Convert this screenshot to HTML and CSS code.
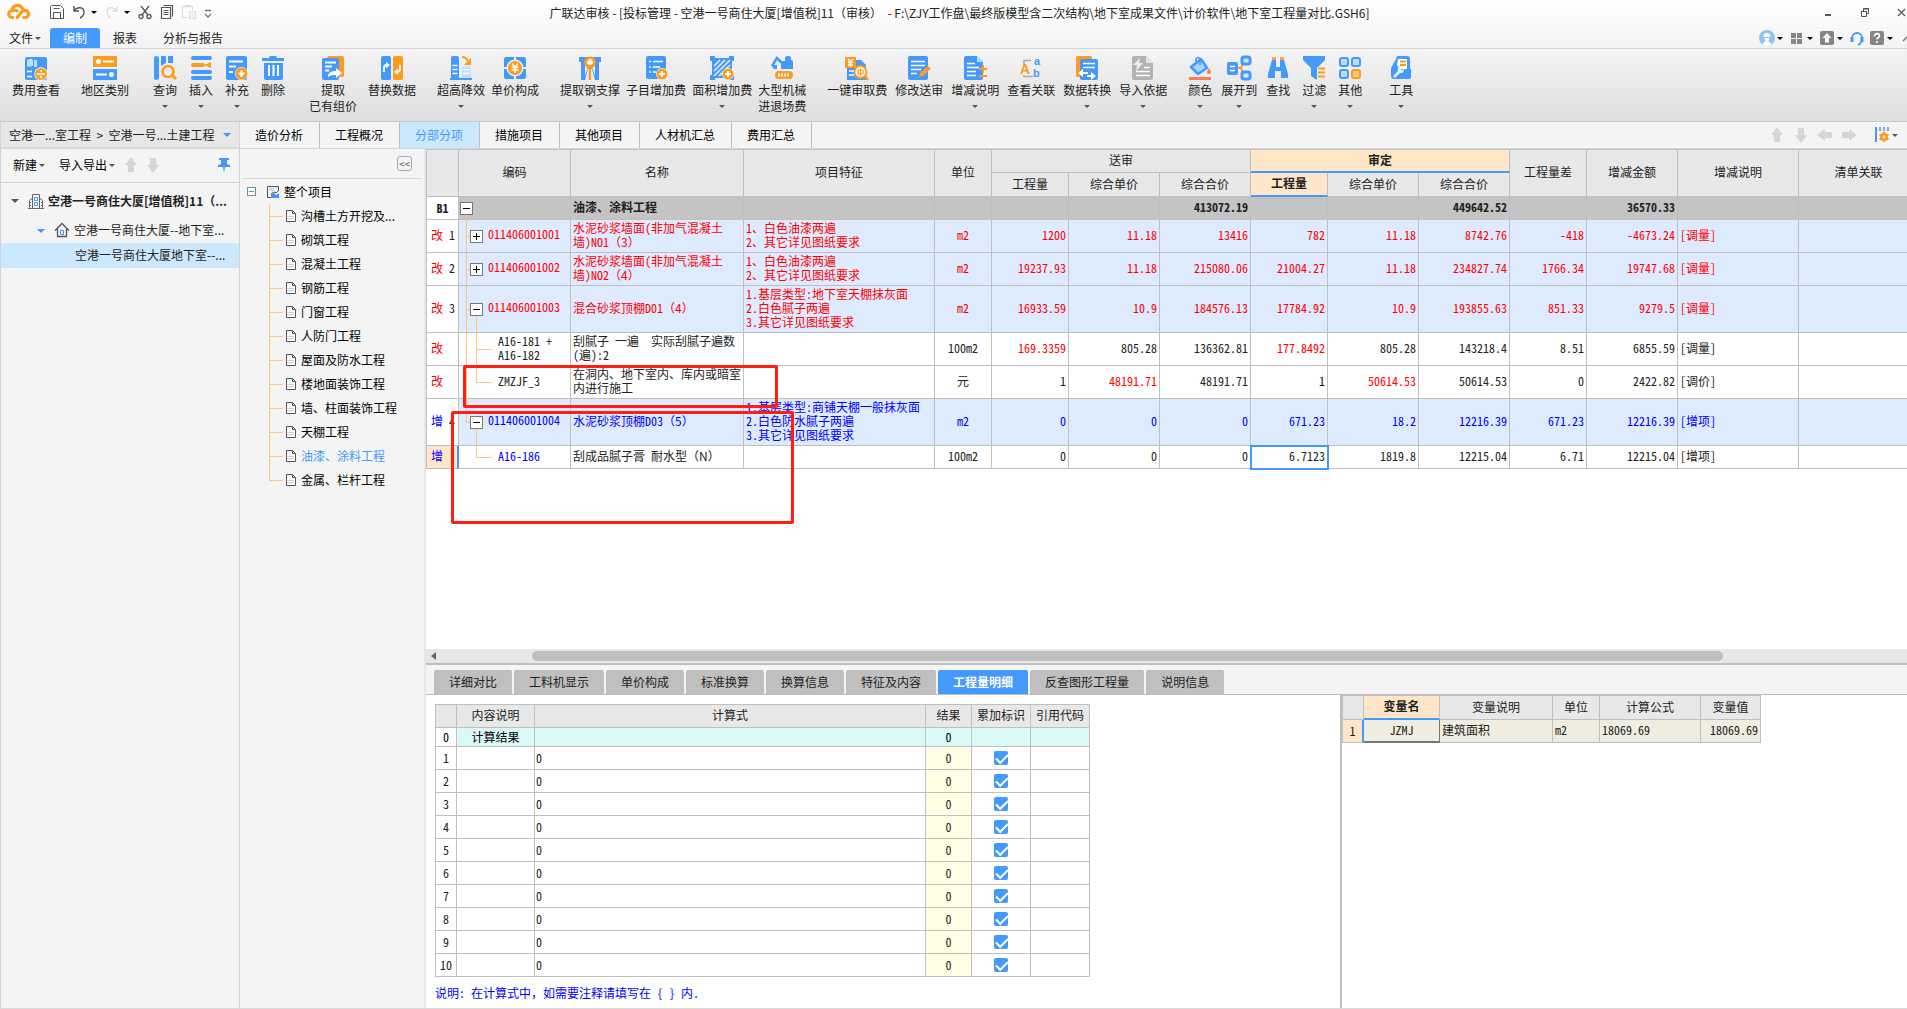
FILE: index.html
```html
<!DOCTYPE html>
<html lang="zh-CN">
<head>
    <meta charset="UTF-8">
    <meta name="viewport" content="width=device-width, initial-scale=1.0">
    <title>广联达审核</title>
    <link rel="stylesheet" href="styles.css">
</head>
<body>
    <svg class="defs" aria-hidden="true">
        <symbol id="doc" viewBox="0 0 12 14">
            <path d="M1.500 1.500h6l3 3v8h-9z" fill="#fff" stroke="#555"/>
            <path d="M7.500 1.500v3h3" fill="none" stroke="#555"/>
            <path d="M3 7.500h6M3 9.500h6" stroke="#ccc"/>
        </symbol>
        <symbol id="arrow" viewBox="0 0 16 16">
            <path d="M8 0l6 8h-3v7H5V8H2z" fill="#d6d6d6"/>
        </symbol>
        <symbol id="plus" viewBox="0 0 12 12">
            <circle cx="6" cy="6" r="6" fill="#fff"/>
            <circle cx="6" cy="6" r="5.500" fill="#ff9a1a"/>
            <path d="M6 3v6M3 6h6" stroke="#fff" stroke-width="2"/>
        </symbol>
    </svg>

    <header class="top">
        <div class="title-row">
            <div class="quick">
                <svg class="logo" viewBox="0 0 24 18"><path d="M7 14.500H5.500a3.500 3.500 0 0 1-.5-7c0-4.500 5.500-6.500 9-4 1.500 1 2 2.500 2 3.500M5.500 8c3-1.500 5 0 5.500 1M9 14.500c4 0 3.500-6 7.500-7 5.500-1 7 6 2 7h-3" fill="none" stroke="#ff9a1a" stroke-width="3.200"/></svg>
                <button aria-label="保存"><svg viewBox="0 0 16 16"><path d="M1.500 14.500v-12l1-1h9l3 3v10zM4.500 14.500v-6h7v6M4.500 4.500h6" fill="none" stroke="#555"/></svg></button>
                <button aria-label="撤销"><svg viewBox="0 0 16 16"><path d="M3 2v5h5M3 7c3-5 10-4 10 1 0 3-2 5-4 6" fill="none" stroke="#555" stroke-width="1.400"/></svg><i class="caret dark"></i></button>
                <button aria-label="恢复"><svg viewBox="0 0 16 16"><path d="M13 2v5H8M13 7C10 2 3 3 3 8c0 3 2 5 4 6" fill="none" stroke="#ddd" stroke-width="1.400"/></svg><i class="caret dark"></i></button>
                <button aria-label="剪切"><svg viewBox="0 0 16 16"><path d="M4 2l7 9M12 2l-7 9" stroke="#555" stroke-width="1.300"/><circle cx="4" cy="12.500" r="2" fill="none" stroke="#555" stroke-width="1.300"/><circle cx="12" cy="12.500" r="2" fill="none" stroke="#555" stroke-width="1.300"/></svg></button>
                <button aria-label="复制"><svg viewBox="0 0 16 16"><path d="M4.500 1.500h9v11M2.500 3.500h9v11h-9zM4.500 6.500h5M4.500 8.500h5M4.500 10.500h5" fill="none" stroke="#555" stroke-width="1.200"/></svg></button>
                <button aria-label="粘贴"><svg viewBox="0 0 16 16"><path d="M6 13.500H1.500v-11h10V6M4.500 3.500v-2h4v2M8.500 7.500h6v7h-6zM10 10h3M10 12h3" fill="none" stroke="#ddd" stroke-width="1.200"/></svg></button>
                <button aria-label="更多"><svg class="narrow" viewBox="0 0 10 16"><path d="M2 6.500h6M2 10l3 3 3-3" fill="none" stroke="#777" stroke-width="1.300"/></svg></button>
            </div>
            <h1 class="title">广联达审核 - [投标管理 - 空港一号商住大厦[增值税]11（审核）&nbsp; - F:\ZJY工作盘\最终版模型含二次结构\地下室成果文件\计价软件\地下室工程量对比.GSH6]</h1>
            <div class="window-buttons">
                <button aria-label="最小化"><svg viewBox="0 0 16 16"><path d="M5 11h6" stroke="#555" stroke-width="2"/></svg></button>
                <button aria-label="还原"><svg viewBox="0 0 16 16"><path d="M4.500 7.500h5v5h-5zM4 7.500h6M6.500 7V4.500h5v5H10M6.500 5h5" fill="none" stroke="#555"/></svg></button>
                <button class="close" aria-label="关闭"><svg viewBox="0 0 16 16"><path d="M7 5l7 7M14 5l-7 7" stroke="#555" stroke-width="1.200"/></svg></button>
            </div>
        </div>
        <nav class="menu-row">
            <button class="menu file">文件<i class="caret"></i></button>
            <button class="menu active">编制</button>
            <button class="menu">报表</button>
            <button class="menu wide">分析与报告</button>
            <div class="menu-tools">
                <button aria-label="用户"><svg viewBox="0 0 16 16"><circle cx="8" cy="8" r="8" fill="#8cc4f6"/><path d="M4.500 7a3.500 4 0 0 1 7 0zM5.500 8h5a2.500 3 0 0 1-1 2.500c0 2 3 2 3 4a8 8 0 0 1-9 0c0-2 3-2 3-4a2.500 3 0 0 1-1-2.500" fill="#fff"/></svg><i class="caret dark"></i></button>
                <button aria-label="布局"><svg viewBox="0 0 16 16"><path d="M2 3h5v5H2zM8 3h5v5H8zM2 9h5v5H2zM8 9h5v5H8z" fill="#858585"/></svg><i class="caret dark"></i></button>
                <button aria-label="升级"><svg viewBox="0 0 16 16"><rect x="1" y="1" width="14" height="14" rx="2" fill="#858585"/><path d="M8 3l4.500 5H10v4.500H6V8H3.500z" fill="#fff"/></svg><i class="caret dark"></i></button>
                <button class="short" aria-label="客服"><svg viewBox="0 0 16 16"><path d="M3 9V8a5 5 0 0 1 10 0c0 4-1.500 6-4 7" fill="none" stroke="#4499ff" stroke-width="1.800"/><path d="M1.500 7h3v5h-3zM11.500 7h3v5h-3z" fill="#4499ff"/></svg></button>
                <button aria-label="帮助"><svg viewBox="0 0 16 16"><rect x="1" y="1" width="14" height="14" rx="2" fill="#858585"/><path d="M5.500 6.500c0-4 5-3.500 5-.5 0 2-2.500 1.500-2.500 3.500M8 11v2" fill="none" stroke="#fff" stroke-width="1.600"/></svg><i class="caret dark"></i></button>
                <button class="tiny" aria-label="收起"><svg viewBox="0 0 8 16"><path d="M4 11l5-5" stroke="#777" stroke-width="1.500"/></svg></button>
            </div>
        </nav>
    </header>

    <div class="ribbon">
        <div class="group">
            <button><svg viewBox="0 0 24 24"><rect x="1" y="1" width="22" height="23" rx="2" fill="#4499ff"/><path d="M3 4l4-1.500L9 4v6l-5 1-1-1zM10 4h3v7h-3z" fill="#c4e0ff"/><path d="M3 15.500h5M3 20.500h5" stroke="#fff" stroke-width="1.500"/><circle cx="17" cy="18" r="6.700" fill="#fff"/><circle cx="17" cy="18" r="6" fill="#ff9a1a"/><path d="M13 18h8" stroke="#fff" stroke-width="1.600"/><circle cx="17" cy="15" r="1.200" fill="#fff"/><circle cx="17" cy="21" r="1.200" fill="#fff"/></svg>费用查看</button>
        </div>
        <div class="group">
            <button><svg viewBox="0 0 24 24"><path d="M0 0h24v11H0z" fill="#ff9a1a"/><path d="M0 13h24v11H0z" fill="#4499ff"/><path d="M10 5.500h11M3 18.500h11" stroke="#fff" stroke-width="2"/><circle cx="5.500" cy="5.500" r="2.500" fill="#fff"/><circle cx="18.500" cy="18.500" r="2.500" fill="#fff"/></svg>地区类别</button>
        </div>
        <div class="group">
            <button><svg viewBox="0 0 24 24"><path d="M1 2q0-2 2.500-2T6 2v20q0 2-2.500 2T1 22zM8 0h5v7l-5 3zM15 0h5v7h-5z" fill="#4499ff"/><circle cx="15" cy="15.500" r="6.500" fill="#eee"/><circle cx="15" cy="15.500" r="5.500" fill="none" stroke="#ff9a1a" stroke-width="2.600"/><path d="M19 19l4 4" stroke="#ff9a1a" stroke-width="3"/></svg>查询<i class="caret"></i></button>
            <button><svg viewBox="0 0 24 24"><path d="M4 2h17M4 16h17M4 22h17" stroke="#4499ff" stroke-width="4" stroke-linecap="round"/><path d="M4 9h10" stroke="#ff9a1a" stroke-width="4" stroke-linecap="round"/><path d="M22 6v6l-7-3z" fill="#ff9a1a"/></svg>插入<i class="caret"></i></button>
            <button><svg viewBox="0 0 24 24"><rect x="1" y="0" width="21" height="24" rx="2" fill="#4499ff"/><path d="M4 5.500h14M4 10.500h7M4 16h4" stroke="#fff" stroke-width="2"/><use href="#plus" x="10" y="11" width="13" height="13"/></svg>补充<i class="caret"></i></button>
            <button><svg viewBox="0 0 24 24"><path d="M2 2h6l1-2h6l1 2h7v3H1V2zM3 7h19v15q0 2-2 2H5q-2 0-2-2z" fill="#4499ff"/><path d="M8 9v11M12.500 9v11M17 9v11" stroke="#fff" stroke-width="2"/></svg>删除</button>
        </div>
        <div class="group apart">
            <button><svg viewBox="0 0 24 24"><rect x="6" y="0" width="17" height="21" rx="2" fill="#ff9a1a"/><rect x="1" y="2" width="17" height="22" rx="2" fill="#4499ff"/><path d="M4 6.500h11M4 10.500h7M4 14.500h4" stroke="#fff" stroke-width="1.800"/><path d="M7 21c0-5 4-6 8-6v-3l6 5-6 5v-3c-3 0-5 0-8 2z" fill="#fff"/></svg>提取<br>已有组价</button>
            <button><svg viewBox="0 0 24 24"><rect x="1" y="0" width="10" height="24" rx="2" fill="#4499ff"/><rect x="13" y="0" width="10" height="24" rx="2" fill="#ff9a1a"/><path d="M4 16v-4q0-3 3-3M20 9v4q0 3-3 3" fill="none" stroke="#fff" stroke-width="2"/><path d="M6 6l4 3-4 3.500zM18 12.500l-4 3.500 4 3z" fill="#fff"/></svg>替换数据</button>
        </div>
        <div class="group">
            <button><svg viewBox="0 0 24 24"><path d="M2 2q0-2 2-2h4q2 0 2 2v20H2z" fill="#4499ff"/><path d="M13 12q0-2 2-2h5q2 0 2 2v10h-9z" fill="#bfe0ff"/><path d="M3.500 9.500h5M3.500 13.500h5M3.500 17.500h5M14.500 13.500h6M14.500 17.500h6" stroke="#fff" stroke-width="1.500"/><path d="M1 23h22" stroke="#4499ff" stroke-width="2"/><path d="M13 1q4 0 6 4" fill="none" stroke="#ff9a1a" stroke-width="2"/><path d="M22 2v7h-7z" fill="#ff9a1a"/></svg>超高降效<i class="caret"></i></button>
            <button><svg viewBox="0 0 24 24"><rect x="1" y="1" width="22" height="22" rx="2" fill="#4499ff"/><path d="M12 0v4M12 20v4M0 12h4M20 12h4" stroke="#eee" stroke-width="2"/><circle cx="12" cy="12" r="8.500" fill="#eee"/><circle cx="12" cy="12" r="7" fill="#ff9a1a"/><path d="M9 7.500l3 4 3-4M12 11v6M8.500 11.500h7M8.500 14h7" fill="none" stroke="#fff" stroke-width="1.500"/></svg>单价构成</button>
        </div>
        <div class="group">
            <button><svg viewBox="0 0 24 24"><path d="M1 1h22v5h-2v18h-4l-3-11h-4L7 24H3V6H1z" fill="#4499ff"/><path d="M7 8v12l3-9zM17 8v12l-3-9z" fill="#e8f2ff"/><path d="M12 11v13" stroke="#ff9a1a" stroke-width="2.200"/><circle cx="12" cy="6.500" r="6" fill="#ff9a1a"/><path d="M12 3v6M9 6.500h6" stroke="#fff" stroke-width="3"/></svg>提取钢支撑<i class="caret"></i></button>
            <button><svg viewBox="0 0 24 24"><rect x="2" y="0" width="20" height="23" rx="2" fill="#4499ff"/><path d="M5 5.500h2M9 5.500h10M5 11h2M9 11h7M5 16h2M9 16h3" stroke="#fff" stroke-width="1.600"/><use href="#plus" x="12" y="12" width="12" height="12"/></svg>子目增加费</button>
            <button><svg viewBox="0 0 24 24"><path d="M0 0h5v2h14V0h5v5h-2v14h2v5h-5v-2H5v2H0v-5h2V5H0z" fill="#4499ff"/><path d="M4 10l6-6M4 15L15 4M4 20L20 4M9 20L20 9M14 20l6-6" stroke="#dcecff" stroke-width="1.700"/><use href="#plus" x="12" y="12" width="12" height="12"/></svg>面积增加费<i class="caret"></i></button>
            <button><svg viewBox="0 0 24 24"><path d="M11 5h4V1q3-2 6 0v3q2 0 2 2v7H11z" fill="#4499ff"/><path d="M12 7L7 2 2 10" fill="none" stroke="#4499ff" stroke-width="2.500"/><path d="M1 9h6v4H4z" fill="#4499ff"/><rect x="5" y="15" width="18" height="8" rx="4" fill="#ff9a1a"/><path d="M8 19h12" stroke="#fff" stroke-width="3" stroke-dasharray="2 1"/></svg>大型机械<br>进退场费</button>
        </div>
        <div class="group snug">
            <button><svg viewBox="0 0 24 24"><path d="M2 4h14l5 5v15H2z" fill="#4499ff"/><path d="M4 15h5M4 19h5" stroke="#fff" stroke-width="1.600"/><rect x="0" y="1" width="11" height="11" rx="1" fill="#ff9a1a"/><path d="M3 3l2.500 3L8 3M5.500 6v5M3 6.500h5M3 9h5" fill="none" stroke="#fff" stroke-width="1.300"/><circle cx="15.500" cy="16" r="6" fill="#fff" stroke="#ff9a1a" stroke-width="1.800"/><path d="M13 14h5v4h-5zM15.500 12.500v7" fill="none" stroke="#ff9a1a" stroke-width="1.200"/><path d="M20 20l3 4" stroke="#ff9a1a" stroke-width="2.500"/></svg>一键审取费</button>
            <button><svg viewBox="0 0 24 24"><rect x="1" y="0" width="20" height="24" rx="2" fill="#4499ff"/><path d="M4 5.500h14M4 9.500h14M4 13.500h10M4 17.500h6" stroke="#fff" stroke-width="1.700"/><path d="M12 21l1-4 8-7 3 2.500-8 7.500z" fill="#ff9a1a"/></svg>修改送审</button>
            <button><svg viewBox="0 0 24 24"><path d="M1 2q0-2 2-2h11l6 6v16q0 2-2 2H3q-2 0-2-2z" fill="#4499ff"/><path d="M14 0v6h6z" fill="#b9dcff"/><path d="M4 7.500h8M4 11.500h12M4 15.500h9M4 19.500h9" stroke="#fff" stroke-width="1.600"/><path d="M20 9v8M16 13h8M16 20h8" stroke="#ff9a1a" stroke-width="2"/></svg>增减说明<i class="caret"></i></button>
            <button><svg viewBox="0 0 24 24"><path d="M5 9V4.500h7M5 19v1.500h9" fill="none" stroke="#aaa" stroke-width="1.500"/><text x="1" y="18" class="glyph orange">A</text><text x="15" y="9" class="glyph">a</text><text x="14" y="21" class="glyph">b</text></svg>查看关联</button>
            <button><svg viewBox="0 0 24 24"><rect x="1" y="0" width="16" height="21" rx="2" fill="#ff9a1a"/><rect x="5" y="3" width="18" height="21" rx="2" fill="#4499ff"/><path d="M8 7.500h12M8 11.500h12" stroke="#fff" stroke-width="1.700"/><path d="M3 17l5-4v3h5v2H8v3zM21 20l-5-4v3h-4v2h4v3z" fill="#fff"/></svg>数据转换<i class="caret"></i></button>
            <button><svg viewBox="0 0 24 24"><path d="M1 2q0-2 2-2h12l7 7v15q0 2-2 2H3q-2 0-2-2z" fill="#b3b3b3"/><path d="M15 0v7h7z" fill="#e3e3e3"/><path d="M13 11.500h6M5 15.500h14M5 19.500h14" stroke="#fff" stroke-width="1.600"/><path d="M9 2L2 9h4l-1 6 7-8H8z" fill="#eee"/></svg>导入依据<i class="caret"></i></button>
        </div>
        <div class="group tight">
            <button><svg viewBox="0 0 24 24"><path d="M3 11L13 3l6 9-9 6z" fill="#a9d3ff" stroke="#4499ff" stroke-width="2.500" stroke-linejoin="round"/><path d="M8 8V3q2-3 4 0v6" fill="none" stroke="#4499ff" stroke-width="1.600"/><path d="M21 12q4 6 0 6t0-6" fill="#f77e54"/><path d="M1 22.500h22" stroke="#f77e54" stroke-width="3"/></svg>颜色<i class="caret"></i></button>
            <button><svg viewBox="0 0 24 24"><path d="M11 12h3l3-7M14 12l3 8" fill="none" stroke="#ff9a1a" stroke-width="2"/><rect x="0" y="6" width="11" height="13" rx="2" fill="#4499ff"/><path d="M3 10.500h5M3 14.500h5" stroke="#fff" stroke-width="1.600"/><rect x="15" y="1" width="8" height="7" rx="2" fill="#cfe6ff" stroke="#4499ff" stroke-width="3"/><rect x="15" y="16" width="8" height="7" rx="2" fill="#cfe6ff" stroke="#4499ff" stroke-width="3"/></svg>展开到<i class="caret"></i></button>
            <button><svg viewBox="0 0 24 24"><path d="M6 4h4v7h4V4h4l4 14v4h-7v-7H9v7H2v-4z" fill="#4499ff"/><path d="M6 2.500h4M14 2.500h4" stroke="#ff9a1a" stroke-width="2.500"/></svg>查找</button>
            <button><svg viewBox="0 0 24 24"><path d="M1 0h22v4l-8 8v12l-6-4v-8L1 4z" fill="#4499ff"/><path d="M16 12.500h7M16 16.500h7M16 20.500h7" stroke="#ff9a1a" stroke-width="2"/></svg>过滤<i class="caret"></i></button>
            <button><svg viewBox="0 0 24 24"><g fill="#b9dcff" stroke="#4499ff" stroke-width="2"><rect x="2" y="2" width="8" height="8" rx="2"/><rect x="14" y="2" width="8" height="8" rx="2"/><rect x="2" y="14" width="8" height="8" rx="2"/></g><rect x="14" y="14" width="8" height="8" rx="2" fill="#ffc777" stroke="#ff9a1a" stroke-width="2"/></svg>其他<i class="caret"></i></button>
        </div>
        <div class="group">
            <button><svg viewBox="0 0 24 24"><path d="M7 3q0-3 3-3h8q3 0 3 3v10h1v8q0 2-2 2H5q-3 0-3-3v-8z" fill="#4499ff"/><path d="M9 3h9v10h-7L8 9z" fill="#fff"/><path d="M11 5.500h6M11 9h6" stroke="#ff9a1a" stroke-width="2"/><path d="M4 20l5-5q-1-4 2-5v3l2 1 2-1q0 5-4 4l-5 5z" fill="#e4f1ff"/></svg>工具<i class="caret"></i></button>
        </div>
    </div>

    <div class="workspace">
        <aside class="projects">
            <button class="crumb">空港一...室工程&nbsp; &gt; &nbsp;空港一号...土建工程<i class="caret blue"></i></button>
            <div class="project-tools">
                <button>新建<i class="caret"></i></button>
                <button>导入导出<i class="caret"></i></button>
                <button class="move" aria-label="上移"><svg viewBox="0 0 16 16"><use href="#arrow"/></svg></button>
                <button class="move" aria-label="下移"><svg class="down" viewBox="0 0 16 16"><use href="#arrow"/></svg></button>
                <button class="pin" aria-label="固定"><svg viewBox="0 0 16 16"><path d="M3 1h10v2h-2v4l3 1v2H9l-1 6-1-6H2V8l3-1V3H3z" fill="#4499ff"/></svg></button>
            </div>
            <ul class="project-tree">
                <li class="root"><i class="caret"></i><svg viewBox="0 0 16 16"><path d="M1.500 15V7.500L4.500 5M14.500 15V7.500L11.500 5M4.500 15V1.500h7V15M0 15.500h16M2 9.500h1M2 12.500h1M13 9.500h1M13 12.500h1" fill="none" stroke="#666"/><path d="M6.500 4.500h3v3h-3zM6.500 9.500h3v3h-3z" fill="none" stroke="#4499ff"/></svg>空港一号商住大厦[增值税]11（...</li>
                <li class="branch"><i class="caret blue"></i><svg viewBox="0 0 16 16"><path d="M1 8.500l7-7 7 7M3.500 7v7.500h9V7" fill="none" stroke="#555" stroke-width="1.300"/><path d="M6.500 8.500h3v4h-3z" fill="none" stroke="#4499ff"/></svg>空港一号商住大厦--地下室...</li>
                <li class="leaf">空港一号商住大厦地下室--...</li>
            </ul>
        </aside>

        <main class="main">
            <div class="tabs">
                <button>造价分析</button>
                <button>工程概况</button>
                <button class="active">分部分项</button>
                <button>措施项目</button>
                <button>其他项目</button>
                <button>人材机汇总</button>
                <button>费用汇总</button>
                <div class="tab-tools">
                    <button aria-label="上移"><svg viewBox="0 0 16 16"><use href="#arrow"/></svg></button>
                    <button aria-label="下移"><svg class="down" viewBox="0 0 16 16"><use href="#arrow"/></svg></button>
                    <button aria-label="左移"><svg class="left" viewBox="0 0 16 16"><use href="#arrow"/></svg></button>
                    <button aria-label="右移"><svg class="right" viewBox="0 0 16 16"><use href="#arrow"/></svg></button>
                    <button class="columns" aria-label="列设置"><svg viewBox="0 0 16 16"><path d="M2 0v15" stroke="#4499ff" stroke-width="2"/><path d="M6 0v4M10 0v4M14 0v4" stroke="#4499ff" stroke-width="1.500"/><circle cx="10" cy="10" r="2.700" fill="none" stroke="#ff9a1a" stroke-width="2.500"/><path d="M10 5v2M10 13v2M5.500 7.500l2 1M12.500 11.500l2 1M5.500 12.500l2-1M12.500 8.500l2-1" stroke="#ff9a1a" stroke-width="2"/></svg><i class="caret"></i></button>
                </div>
            </div>

            <div class="content">
                <section class="chapters">
                    <div class="chapters-head"><button aria-label="收起">&lt;&lt;</button></div>
                    <div class="chapter-root"><i class="box"></i><svg viewBox="0 0 14 14"><path d="M12.500 6V1.500h-11v11H5" fill="none" stroke="#555"/><path d="M3 3h5v3H3z" fill="#b9dcff"/><path d="M5 13V9l3-1 2 2 3-2v5z" fill="#4499ff"/><path d="M5 9l3-2 2 1 3-3" fill="none" stroke="#555"/></svg>整个项目</div>
                    <ul class="chapter-list">
                        <li><svg viewBox="0 0 12 14"><use href="#doc"/></svg>沟槽土方开挖及...</li>
                        <li><svg viewBox="0 0 12 14"><use href="#doc"/></svg>砌筑工程</li>
                        <li><svg viewBox="0 0 12 14"><use href="#doc"/></svg>混凝土工程</li>
                        <li><svg viewBox="0 0 12 14"><use href="#doc"/></svg>钢筋工程</li>
                        <li><svg viewBox="0 0 12 14"><use href="#doc"/></svg>门窗工程</li>
                        <li><svg viewBox="0 0 12 14"><use href="#doc"/></svg>人防门工程</li>
                        <li><svg viewBox="0 0 12 14"><use href="#doc"/></svg>屋面及防水工程</li>
                        <li><svg viewBox="0 0 12 14"><use href="#doc"/></svg>楼地面装饰工程</li>
                        <li><svg viewBox="0 0 12 14"><use href="#doc"/></svg>墙、柱面装饰工程</li>
                        <li><svg viewBox="0 0 12 14"><use href="#doc"/></svg>天棚工程</li>
                        <li class="current"><svg viewBox="0 0 12 14"><use href="#doc"/></svg>油漆、涂料工程</li>
                        <li><svg viewBox="0 0 12 14"><use href="#doc"/></svg>金属、栏杆工程</li>
                    </ul>
                </section>

                <section class="sheet">
                    <div class="grid-area">
                        <table class="grid bill">
                            <colgroup>
                                <col class="w-mark"><col class="w-code"><col class="w-name"><col class="w-feature"><col class="w-unit">
                                <col class="w-qty"><col class="w-price"><col class="w-price">
                                <col class="w-qty"><col class="w-price"><col class="w-price">
                                <col class="w-qty"><col class="w-price"><col class="w-note"><col class="w-link">
                            </colgroup>
                            <thead>
                                <tr>
                                    <th rowspan="2"></th>
                                    <th rowspan="2">编码</th>
                                    <th rowspan="2">名称</th>
                                    <th rowspan="2">项目特征</th>
                                    <th rowspan="2">单位</th>
                                    <th colspan="3">送审</th>
                                    <th colspan="3" class="hot">审定</th>
                                    <th rowspan="2">工程量差</th>
                                    <th rowspan="2">增减金额</th>
                                    <th rowspan="2">增减说明</th>
                                    <th rowspan="2">清单关联</th>
                                </tr>
                                <tr class="sub">
                                    <th>工程量</th><th>综合单价</th><th>综合合价</th>
                                    <th class="hot">工程量</th><th>综合单价</th><th>综合合价</th>
                                </tr>
                            </thead>
                            <tbody>
                                <tr class="total">
                                    <td class="mark center">B1</td>
                                    <td class="code lv0"><button class="box minus" aria-label="折叠"></button></td>
                                    <td>油漆、涂料工程</td><td></td><td></td>
                                    <td></td><td></td><td class="num">413072.19</td>
                                    <td></td><td></td><td class="num">449642.52</td>
                                    <td></td><td class="num">36570.33</td><td></td><td></td>
                                </tr>
                                <tr class="item changed">
                                    <td class="mark">改 <b>1</b></td>
                                    <td class="code lv1"><button class="box" aria-label="展开"></button>011406001001</td>
                                    <td>水泥砂浆墙面(非加气混凝土<br>墙)NO1<span class="full">（3）</span></td>
                                    <td>1、白色油漆两遍<br>2、其它详见图纸要求</td>
                                    <td class="center">m2</td>
                                    <td class="num">1200</td><td class="num">11.18</td><td class="num">13416</td>
                                    <td class="num">782</td><td class="num">11.18</td><td class="num">8742.76</td>
                                    <td class="num">-418</td><td class="num">-4673.24</td><td>[调量]</td><td></td>
                                </tr>
                                <tr class="item changed">
                                    <td class="mark">改 <b>2</b></td>
                                    <td class="code lv1"><button class="box" aria-label="展开"></button>011406001002</td>
                                    <td>水泥砂浆墙面(非加气混凝土<br>墙)NO2<span class="full">（4）</span></td>
                                    <td>1、白色油漆两遍<br>2、其它详见图纸要求</td>
                                    <td class="center">m2</td>
                                    <td class="num">19237.93</td><td class="num">11.18</td><td class="num">215080.06</td>
                                    <td class="num">21004.27</td><td class="num">11.18</td><td class="num">234827.74</td>
                                    <td class="num">1766.34</td><td class="num">19747.68</td><td>[调量]</td><td></td>
                                </tr>
                                <tr class="item changed tall">
                                    <td class="mark">改 <b>3</b></td>
                                    <td class="code lv1 open"><button class="box minus" aria-label="折叠"></button>011406001003</td>
                                    <td>混合砂浆顶棚D01<span class="full">（4）</span></td>
                                    <td>1.基层类型:地下室天棚抹灰面<br>2.白色腻子两遍<br>3.其它详见图纸要求</td>
                                    <td class="center">m2</td>
                                    <td class="num">16933.59</td><td class="num">10.9</td><td class="num">184576.13</td>
                                    <td class="num">17784.92</td><td class="num">10.9</td><td class="num">193855.63</td>
                                    <td class="num">851.33</td><td class="num">9279.5</td><td>[调量]</td><td></td>
                                </tr>
                                <tr class="child">
                                    <td class="mark red">改</td>
                                    <td class="code lv2">A16-181 +<br>A16-182</td>
                                    <td>刮腻子 一遍&nbsp; 实际刮腻子遍数<br>(遍):2</td><td></td>
                                    <td class="center">100m2</td>
                                    <td class="num red">169.3359</td><td class="num">805.28</td><td class="num">136362.81</td>
                                    <td class="num red">177.8492</td><td class="num">805.28</td><td class="num">143218.4</td>
                                    <td class="num">8.51</td><td class="num">6855.59</td><td>[调量]</td><td></td>
                                </tr>
                                <tr class="child">
                                    <td class="mark red">改</td>
                                    <td class="code lv2 last">ZMZJF_3</td>
                                    <td>在洞内、地下室内、库内或暗室<br>内进行施工</td><td></td>
                                    <td class="center">元</td>
                                    <td class="num">1</td><td class="num red">48191.71</td><td class="num">48191.71</td>
                                    <td class="num">1</td><td class="num red">50614.53</td><td class="num">50614.53</td>
                                    <td class="num">0</td><td class="num">2422.82</td><td>[调价]</td><td></td>
                                </tr>
                                <tr class="item added tall">
                                    <td class="mark">增 <b>4</b></td>
                                    <td class="code lv1 open last"><button class="box minus" aria-label="折叠"></button>011406001004</td>
                                    <td>水泥砂浆顶棚D03<span class="full">（5）</span></td>
                                    <td>1.基层类型:商铺天棚一般抹灰面<br>2.白色防水腻子两遍<br>3.其它详见图纸要求</td>
                                    <td class="center">m2</td>
                                    <td class="num">0</td><td class="num">0</td><td class="num">0</td>
                                    <td class="num">671.23</td><td class="num">18.2</td><td class="num">12216.39</td>
                                    <td class="num">671.23</td><td class="num">12216.39</td><td>[增项]</td><td></td>
                                </tr>
                                <tr class="child single">
                                    <td class="mark blue picked">增</td>
                                    <td class="code lv2 end blue">A16-186</td>
                                    <td>刮成品腻子膏 耐水型<span class="full">（N）</span></td><td></td>
                                    <td class="center">100m2</td>
                                    <td class="num">0</td><td class="num">0</td><td class="num">0</td>
                                    <td class="num cursor">6.7123</td><td class="num">1819.8</td><td class="num">12215.04</td>
                                    <td class="num">6.71</td><td class="num">12215.04</td><td>[增项]</td><td></td>
                                </tr>
                            </tbody>
                        </table>
                        <div class="callout first"></div>
                        <div class="callout second"></div>
                    </div>
                    <div class="scrollbar"><i class="back"></i><div class="track"><div class="thumb"></div></div></div>

                    <div class="detail-tabs">
                        <button>详细对比</button>
                        <button>工料机显示</button>
                        <button>单价构成</button>
                        <button>标准换算</button>
                        <button>换算信息</button>
                        <button>特征及内容</button>
                        <button class="active">工程量明细</button>
                        <button>反查图形工程量</button>
                        <button>说明信息</button>
                    </div>
                    <div class="detail">
                        <div class="formulas">
                            <table class="grid calc">
                                <colgroup><col class="c-no"><col class="c-desc"><col class="c-formula"><col class="c-result"><col class="c-flag"><col class="c-flag"></colgroup>
                                <thead>
                                    <tr><th></th><th>内容说明</th><th>计算式</th><th>结果</th><th>累加标识</th><th>引用代码</th></tr>
                                </thead>
                                <tbody>
                                    <tr class="sum"><td>0</td><td>计算结果</td><td></td><td>0</td><td></td><td></td></tr>
                                    <tr><td>1</td><td></td><td>0</td><td>0</td><td><input type="checkbox" aria-label="累加标识 1" checked></td><td></td></tr>
                                    <tr><td>2</td><td></td><td>0</td><td>0</td><td><input type="checkbox" aria-label="累加标识 2" checked></td><td></td></tr>
                                    <tr><td>3</td><td></td><td>0</td><td>0</td><td><input type="checkbox" aria-label="累加标识 3" checked></td><td></td></tr>
                                    <tr><td>4</td><td></td><td>0</td><td>0</td><td><input type="checkbox" aria-label="累加标识 4" checked></td><td></td></tr>
                                    <tr><td>5</td><td></td><td>0</td><td>0</td><td><input type="checkbox" aria-label="累加标识 5" checked></td><td></td></tr>
                                    <tr><td>6</td><td></td><td>0</td><td>0</td><td><input type="checkbox" aria-label="累加标识 6" checked></td><td></td></tr>
                                    <tr><td>7</td><td></td><td>0</td><td>0</td><td><input type="checkbox" aria-label="累加标识 7" checked></td><td></td></tr>
                                    <tr><td>8</td><td></td><td>0</td><td>0</td><td><input type="checkbox" aria-label="累加标识 8" checked></td><td></td></tr>
                                    <tr><td>9</td><td></td><td>0</td><td>0</td><td><input type="checkbox" aria-label="累加标识 9" checked></td><td></td></tr>
                                    <tr><td>10</td><td></td><td>0</td><td>0</td><td><input type="checkbox" aria-label="累加标识 10" checked></td><td></td></tr>
                                </tbody>
                            </table>
                            <p class="hint">说明: 在计算式中<span class="full">，</span>如需要注释请填写在 { } 内.</p>
                        </div>
                        <div class="variables">
                            <table class="grid vars">
                                <colgroup><col class="c-no"><col class="v-name"><col class="v-desc"><col class="v-unit"><col class="v-formula"><col class="v-value"></colgroup>
                                <thead>
                                    <tr><th></th><th class="hot">变量名</th><th>变量说明</th><th>单位</th><th>计算公式</th><th>变量值</th></tr>
                                </thead>
                                <tbody>
                                    <tr><td class="picked">1</td><td class="center cell">JZMJ</td><td>建筑面积</td><td>m2</td><td>18069.69</td><td class="num">18069.69</td></tr>
                                </tbody>
                            </table>
                        </div>
                    </div>
                </section>
            </div>
        </main>
    </div>
</body>
</html>
```

FILE: styles.css
```css
* {
    box-sizing: border-box;
}
body {
    margin: 0;
    height: 100vh;
    display: flex;
    flex-direction: column;
    overflow: hidden;
    border-bottom: 1px solid #d9d9d9;
    background: #f4f4f4;
    color: #222;
    font-family: "Noto Sans CJK SC", sans-serif;
    font-size: 12px;
    line-height: 16px;
}
button {
    display: flex;
    align-items: center;
    padding: 0;
    border: 0;
    background: none;
    color: inherit;
    font: inherit;
    white-space: nowrap;
}
svg {
    display: block;
    flex: none;
    width: 16px;
    height: 16px;
}
ul {
    margin: 0;
    padding: 0;
    list-style: none;
}
.defs {
    position: absolute;
    width: 0;
    height: 0;
}
.caret {
    flex: none;
    margin: 1px 0 0 2px;
    border: 3px solid transparent;
    border-top-color: #555;
    border-bottom: 0;
}
.caret.dark {
    border-top-color: #000;
}
.caret.blue {
    border-width: 4px 4px 0;
    border-top-color: #4499ff;
}

/* title and menu */
.top {
    flex: none;
    background: linear-gradient(#fff, #f3f3f3);
    border-bottom: 1px solid #d4d4d4;
}
.title-row {
    display: flex;
    height: 28px;
}
.quick {
    display: flex;
    flex: 0 0 216px;
    height: 24px;
    padding-left: 7px;
}
.quick .logo {
    width: 24px;
    height: 18px;
    margin: 3px 15px 0 0;
}
.quick button {
    padding: 0 3px;
}
.quick .caret {
    border-width: 3px 3px 0;
    margin: 1px 1px 0 4px;
}
.quick .narrow {
    width: 10px;
}
.title {
    flex: 1;
    margin: 0;
    text-align: center;
    font-size: 12px;
    font-weight: normal;
    line-height: 26px;
    white-space: nowrap;
}
.window-buttons {
    display: flex;
    flex: 0 0 204px;
    justify-content: flex-end;
    height: 24px;
}
.window-buttons button {
    width: 37px;
    justify-content: center;
}
.window-buttons .close {
    width: 24px;
    justify-content: flex-end;
}
.menu-row {
    display: flex;
    height: 20px;
}
.menu {
    width: 50px;
    justify-content: center;
}
.menu.wide {
    width: 86px;
}
.menu.active {
    background: #4499ff;
    border-radius: 3px 3px 0 0;
    color: #fff;
}
.menu-tools {
    display: flex;
    margin-left: auto;
}
.menu-tools button {
    width: 30px;
}
.menu-tools .short {
    width: 20px;
}
.menu-tools .tiny,
.menu-tools .tiny svg {
    width: 8px;
}

/* ribbon */
.ribbon {
    display: flex;
    flex: none;
    height: 73px;
    padding-left: 9px;
    background: linear-gradient(#f4f4f4, #dedede);
    border-bottom: 1px solid #c8c8c8;
}
.group {
    display: flex;
    margin-right: 15px;
}
.group.apart {
    gap: 5px;
}
.group.snug {
    gap: 2px;
    margin-right: 12px;
}
.group button {
    display: block;
    min-width: 36px;
    padding: 7px 3px 0;
    align-self: flex-start;
    text-align: center;
}
.group svg {
    width: 24px;
    height: 24px;
    margin: 0 auto 2px;
    overflow: visible;
}
.group .caret {
    display: block;
    width: 6px;
    margin: 7px auto 0;
}
.glyph {
    fill: #4499ff;
    font: bold 11px "Liberation Sans", sans-serif;
}
.glyph.orange {
    fill: #ff9a1a;
    font-size: 14px;
}

/* left side */
.workspace {
    display: flex;
    flex: 1;
    min-height: 0;
}
.projects {
    flex: 0 0 240px;
    border: solid #d4d4d4;
    border-width: 0 1px;
}
.crumb {
    width: 100%;
    height: 27px;
    padding: 0 8px;
    background: #e7e7e7;
    border-bottom: 2px solid #d9d9d9;
}
.crumb .caret {
    margin-left: auto;
}
.project-tools {
    display: flex;
    height: 34px;
    padding: 0 7px 2px 12px;
    border-bottom: 1px solid #d4d4d4;
    color: #000;
}
.project-tools button {
    margin-right: 14px;
}
.project-tools .move {
    margin: 0 14px 0 -6px;
}
.project-tools .move + .move {
    margin-left: -8px;
}
.project-tools .pin {
    margin: 0 0 0 auto;
}
.down {
    transform: rotate(180deg);
}
.left {
    transform: rotate(-90deg);
}
.right {
    transform: rotate(90deg);
}
.project-tree {
    padding-top: 5px;
}
.project-tree li {
    display: flex;
    align-items: center;
    height: 25px;
    padding-bottom: 1px;
    white-space: nowrap;
}
.project-tree svg {
    margin: 0 4px 0 9px;
}
.project-tree .root {
    height: 26px;
    padding-left: 8px;
    font-weight: bold;
}
.project-tree .root .caret {
    border-width: 4px 4px 0;
}
.project-tree .branch {
    height: 29px;
    padding: 3px 0 0 34px;
}
.project-tree .leaf {
    padding-left: 74px;
    background: #cce8ff;
}
.main {
    display: flex;
    flex: 1;
    flex-direction: column;
    min-width: 0;
}
.tabs {
    display: flex;
    flex: none;
    height: 27px;
    border-bottom: 1px solid #d9d9d9;
    color: #000;
}
.tabs > button {
    padding: 0 16px 0 15px;
    border-right: 1px solid #bfbfbf;
}
.tabs > .active {
    background: #cce8ff;
    color: #4499ff;
}
.tab-tools {
    display: flex;
    gap: 8px;
    margin-left: auto;
    padding-right: 9px;
}
.tab-tools .columns {
    margin-left: 9px;
}
.content {
    display: flex;
    flex: 1;
    min-height: 0;
}
.chapters {
    flex: 0 0 186px;
    border-right: 2px solid #e7e7e7;
    color: #000;
}
.chapters-head {
    display: flex;
    justify-content: flex-end;
    height: 30px;
    margin: 0 2px;
    padding: 7px 10px 0 0;
    border-bottom: 1px solid #d9d9d9;
}
.chapters-head button {
    justify-content: center;
    width: 15px;
    height: 15px;
    border: 1px solid #aaa;
    border-radius: 3px;
    color: #555;
    font-size: 10px;
}
.chapter-root {
    display: flex;
    align-items: center;
    height: 25px;
    padding-left: 7px;
}
.chapter-root .box {
    width: 9px;
    height: 9px;
    margin-right: 10px;
    border: 1px solid #888;
    background: linear-gradient(#2aa9d8, #2aa9d8) no-repeat center / 5px 1px #fff;
}
.chapter-root svg {
    width: 14px;
    height: 14px;
    margin-right: 4px;
}
.chapter-list li {
    display: flex;
    align-items: center;
    height: 24px;
    padding-left: 45px;
    background:
        linear-gradient(#ffc57f, #ffc57f) no-repeat 29px 0 / 1px 100%,
        linear-gradient(#ffc57f, #ffc57f) no-repeat 29px 50% / 13px 1px;
}
.chapter-list li:last-child {
    background-size: 1px 50%, 13px 1px;
}
.chapter-list svg {
    width: 12px;
    height: 14px;
    margin-right: 4px;
}
.chapter-list .current {
    color: #4499ff;
}

/* sheets */
.sheet {
    display: flex;
    flex: 1;
    flex-direction: column;
    min-width: 0;
}
.grid-area {
    position: relative;
    flex: 1;
    min-height: 0;
    overflow: hidden;
    background: #fff;
}
.grid {
    table-layout: fixed;
    border-collapse: separate;
    border-spacing: 0;
    border: solid #bfbfbf;
    border-width: 1px 0 0 1px;
    font-feature-settings: "hwid";
    line-height: 14px;
    white-space: nowrap;
}
.grid th,
.grid td {
    height: 23px;
    padding: 0 2px 2px;
    border: solid #bfbfbf;
    border-width: 0 1px 1px 0;
    overflow: hidden;
    font-weight: normal;
    text-align: left;
}
.grid th {
    background: #e8e8e8;
    text-align: center;
}
.grid .hot {
    background: #ffe6c8;
    border-bottom: 2px solid #4499ff;
    font-weight: bold;
}
.grid .num {
    text-align: right;
}
.grid .center {
    text-align: center;
}
/* keeps full-width brackets and commas full width */
.full {
    font-feature-settings: normal;
}
.bill {
    width: 1493px;
}
.w-mark { width: 32px; }
.w-code { width: 112px; }
.w-name { width: 173px; }
.w-feature { width: 191px; }
.w-unit { width: 57px; }
.w-qty { width: 77px; }
.w-price { width: 91px; }
.w-note { width: 121px; }
.w-link { width: 120px; }
.bill .sub th {
    height: 24px;
}
.bill td {
    height: 33px;
}
.bill .total td,
.bill .single td {
    height: 23px;
}
.bill .tall td {
    height: 47px;
}
.bill .total td {
    background-color: #c4c4c4;
    font-weight: bold;
}
.bill .item td {
    background-color: #deeafe;
}
.bill .changed td,
.bill .red {
    color: #f00;
}
.bill .added td,
.bill .blue {
    color: #00f;
}
.bill tr td.mark {
    padding-left: 4px;
    background-color: #fff;
}
.bill tr td.mark.center {
    padding: 0;
}
.mark b {
    color: #222;
    font-weight: normal;
}
.bill tr td.picked {
    background-color: #ffe6c8;
    border-right: 2px solid #4499ff;
}
.bill .cursor {
    outline: 2px solid #4499ff;
    outline-offset: -1px;
}

/* tree lines in the code column */
.code {
    --line: linear-gradient(#ffc57f, #ffc57f);
    background-repeat: no-repeat;
}
.lv0 {
    background-image: var(--line);
    background-position: 7px 100%;
    background-size: 1px 50%;
}
.bill .lv0 {
    padding-left: 1px;
}
.bill .lv1 {
    padding-left: 11px;
    background-image: var(--line), var(--line);
    background-position: 7px 0, 7px 50%;
    background-size: 1px 100%, 5px 1px;
}
.bill .lv1.open {
    background-image: var(--line), var(--line), var(--line);
    background-position: 7px 0, 7px 50%, 17px 100%;
    background-size: 1px 100%, 5px 1px, 1px 50%;
}
.bill .lv1.last {
    background-size: 1px 50%, 5px 1px, 1px 50%;
}
.bill .lv2 {
    padding-left: 39px;
    background-image: var(--line), var(--line), var(--line);
    background-position: 7px 0, 17px 0, 17px 50%;
    background-size: 1px 100%, 1px 100%, 16px 1px;
}
.bill .lv2.last {
    background-size: 1px 100%, 1px 50%, 16px 1px;
}
.bill .lv2.end {
    background-size: 0 0, 1px 50%, 16px 1px;
}
.code .box {
    display: inline-block;
    width: 13px;
    height: 13px;
    margin-right: 5px;
    border: 1px solid #777;
    vertical-align: middle;
    background:
        linear-gradient(#000, #000) no-repeat center / 7px 1px,
        linear-gradient(#000, #000) no-repeat center / 1px 7px,
        #fff;
}
.code .box.minus {
    background-size: 7px 1px, 0 0;
}

/* red review frames drawn over the sheet */
.callout {
    position: absolute;
    border: 3px solid #ff1f12;
    border-radius: 2px;
}
.callout.first {
    left: 37px;
    top: 216px;
    width: 315px;
    height: 43px;
}
.callout.second {
    left: 25px;
    top: 262px;
    width: 343px;
    height: 113px;
}
.scrollbar {
    display: flex;
    align-items: center;
    flex: none;
    height: 16px;
    padding: 0 184px 0 5px;
    background: #e7e7e7;
    border-bottom: 2px solid #bfbfbf;
}
.scrollbar .back {
    border: 4px solid transparent;
    border-left: 0;
    border-right: 5px solid #666;
}
.track {
    flex: 1;
    padding-left: 96px;
}
.thumb {
    height: 10px;
    border-radius: 5px;
    background: #bfbfbf;
}
.detail-tabs {
    display: flex;
    flex: none;
    gap: 2px;
    height: 30px;
    padding: 5px 8px 0;
    border-bottom: 1px solid #bfbfbf;
}
.detail-tabs button {
    padding: 0 15px;
    border-radius: 2px 2px 0 0;
    background: #bfbfbf;
}
.detail-tabs .active {
    background: #4499ff;
    color: #fff;
    font-weight: bold;
}
.detail {
    display: flex;
    flex: none;
    background: #fff;
}
.formulas {
    flex: 1;
    padding: 9px 0 0 9px;
}
.c-no { width: 21px; }
.c-desc { width: 78px; }
.c-formula { width: 391px; }
.c-result { width: 46px; }
.c-flag { width: 59px; }
.calc {
    width: 655px;
}
.grid.calc td {
    padding: 0 0 1px;
    text-align: center;
}
.grid.calc td:nth-child(3) {
    padding-left: 1px;
    text-align: left;
}
.calc td:nth-child(4) {
    background: #ffffe6;
}
.grid.calc .sum td {
    height: 19px;
    color: #000;
}
.calc .sum td + td {
    background: #daf8f8;
}
.calc input {
    appearance: none;
    display: block;
    width: 14px;
    height: 14px;
    margin: 0 auto;
    border-radius: 2px;
    background: #4499ff;
}
.calc input:checked::before {
    content: "";
    display: block;
    width: 10px;
    height: 5px;
    margin: 0 2px;
    border: solid #fff;
    border-width: 0 0 2px 2px;
    transform: translateY(3px) rotate(-45deg);
}
.hint {
    margin: 8px 0 7px;
    color: #00f;
    font-feature-settings: "hwid";
}
.variables {
    flex: 0 0 567px;
    border-left: 2px solid #bfbfbf;
}
.v-name { width: 76px; }
.v-desc { width: 113px; }
.v-unit { width: 47px; }
.v-formula { width: 101px; }
.v-value { width: 60px; }
.vars {
    width: 419px;
}
.vars th {
    height: 24px;
}
.vars td {
    background: #efeddf;
}
.vars td.picked {
    padding: 0;
    border-right: 2px solid #4499ff;
    background: #ffe6c8;
    text-align: center;
}
.vars td.cell {
    border-right: 1px solid #777;
    border-bottom: 2px solid #777;
}
```
